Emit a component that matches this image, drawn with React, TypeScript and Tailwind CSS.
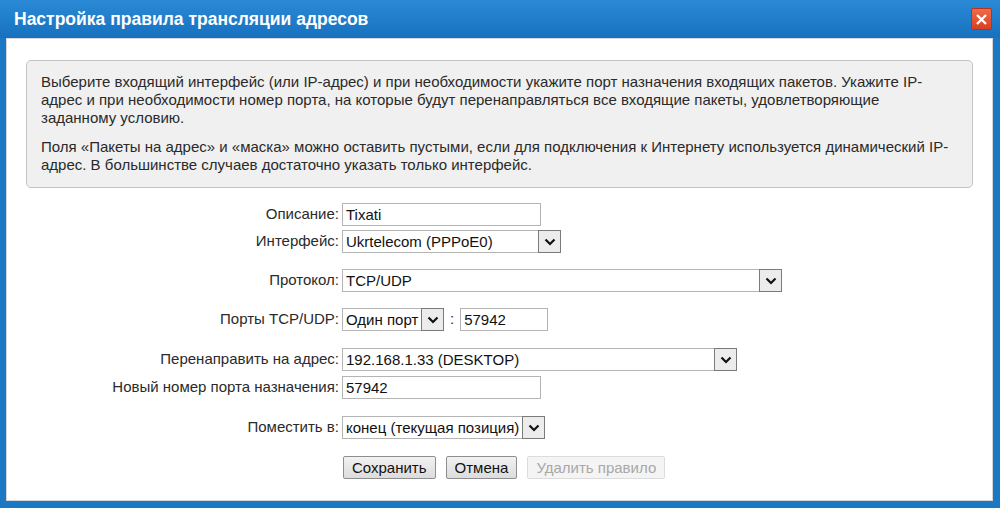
import React from "react";

const font = { fontFamily: '"Liberation Sans", Arial, sans-serif' };

function Chevron() {
  return (
    <svg width="12" height="8" viewBox="0 0 12 8">
      <path d="M1.5 1.5 L6 6 L10.5 1.5" fill="none" stroke="#111" strokeWidth="2.2" />
    </svg>
  );
}

function Select({ value, width }: { value: string; width: string }) {
  return (
    <div className={`flex h-[23px] ${width} border border-[#b4b4b4] bg-white`}>
      <div className="flex-1 overflow-hidden whitespace-nowrap pl-[3px] leading-[21px] text-[#111]">{value}</div>
      <div className="-m-px flex w-[23px] shrink-0 items-center justify-center border border-[#7a7a7a] bg-[#ececec]">
        <Chevron />
      </div>
    </div>
  );
}

function TextField({ value, width }: { value: string; width: string }) {
  return (
    <div className={`h-[23px] ${width} border border-[#b4b4b4] bg-white pl-[3px] leading-[21px] text-[#111]`}>
      {value}
    </div>
  );
}

function Row({ label, children, className = "" }: { label: string; children: React.ReactNode; className?: string }) {
  return (
    <div className={`flex items-center ${className}`}>
      <div className="w-[335px] whitespace-nowrap pr-[3px] text-right text-[#2a2a2a]">{label}</div>
      {children}
    </div>
  );
}

function Button({ label, disabled }: { label: string; disabled?: boolean }) {
  return (
    <button
      className={
        disabled
          ? "h-[23px] rounded-[2px] border border-[#dcdcdc] bg-[#f4f4f4] px-[8px] text-[#a8a8a8]"
          : "h-[23px] rounded-[2px] border border-[#8e8e8e] bg-gradient-to-b from-[#f2f2f2] to-[#dcdcdc] px-[8px] text-[#111]"
      }
    >
      {label}
    </button>
  );
}

export default function App() {
  return (
    <div className="h-[508px] w-[1000px] bg-[#1a78c4]" style={font}>
      <div className="flex h-[38px] items-center justify-between bg-gradient-to-b from-[#2a8ad6] to-[#1671bf] pl-[14px] pr-[8px]">
        <span className="text-[17.5px] font-bold text-white">Настройка правила трансляции адресов</span>
        <div className="flex h-[22px] w-[21px] items-center justify-center rounded-[2px] border border-[#b8321a] bg-gradient-to-b from-[#ef6a4a] to-[#d7401f]">
          <svg width="13" height="13" viewBox="0 0 13 13">
            <path d="M2 2 L11 11 M11 2 L2 11" stroke="#fff" strokeWidth="2.4" />
          </svg>
        </div>
      </div>
      <div className="ml-[6px] mr-[7px] h-[463px] border border-[#d6d6d6] bg-white text-[15px]">
        <div className="mx-[19px] mt-[21px] rounded-[5px] border border-[#c4c4c4] bg-[#f0f0f0] px-[14px] pt-[12px] pb-[13px] leading-[18px] text-[#2a2a2a]">
          <p>
            Выберите входящий интерфейс (или IP-адрес) и при необходимости укажите порт назначения входящих пакетов. Укажите IP-адрес и при необходимости номер порта, на которые будут перенаправляться все входящие пакеты, удовлетворяющие заданному условию.
          </p>
          <p className="mt-[11px]">
            Поля «Пакеты на адрес» и «маска» можно оставить пустыми, если для подключения к Интернету используется динамический IP-адрес. В большинстве случаев достаточно указать только интерфейс.
          </p>
        </div>

        <div className="mt-[15px] flex flex-col">
          <Row label="Описание:">
            <TextField value="Tixati" width="w-[199px]" />
          </Row>
          <Row label="Интерфейс:" className="mt-[4px]">
            <Select value="Ukrtelecom (PPPoE0)" width="w-[219px]" />
          </Row>
          <Row label="Протокол:" className="mt-[16px]">
            <Select value="TCP/UDP" width="w-[440px]" />
          </Row>
          <Row label="Порты TCP/UDP:" className="mt-[16px]">
            <Select value="Один порт" width="w-[102px]" />
            <span className="mx-[6px] text-[#2a2a2a]">:</span>
            <TextField value="57942" width="w-[88px]" />
          </Row>
          <Row label="Перенаправить на адрес:" className="mt-[17px]">
            <Select value="192.168.1.33 (DESKTOP)" width="w-[395px]" />
          </Row>
          <Row label="Новый номер порта назначения:" className="mt-[5px]">
            <TextField value="57942" width="w-[199px]" />
          </Row>
          <Row label="Поместить в:" className="mt-[17px]">
            <Select value="конец (текущая позиция)" width="w-[203px]" />
          </Row>
          <div className="mt-[17px] flex gap-[10px] pl-[336px]">
            <Button label="Сохранить" />
            <Button label="Отмена" />
            <Button label="Удалить правило" disabled />
          </div>
        </div>
      </div>
    </div>
  );
}
